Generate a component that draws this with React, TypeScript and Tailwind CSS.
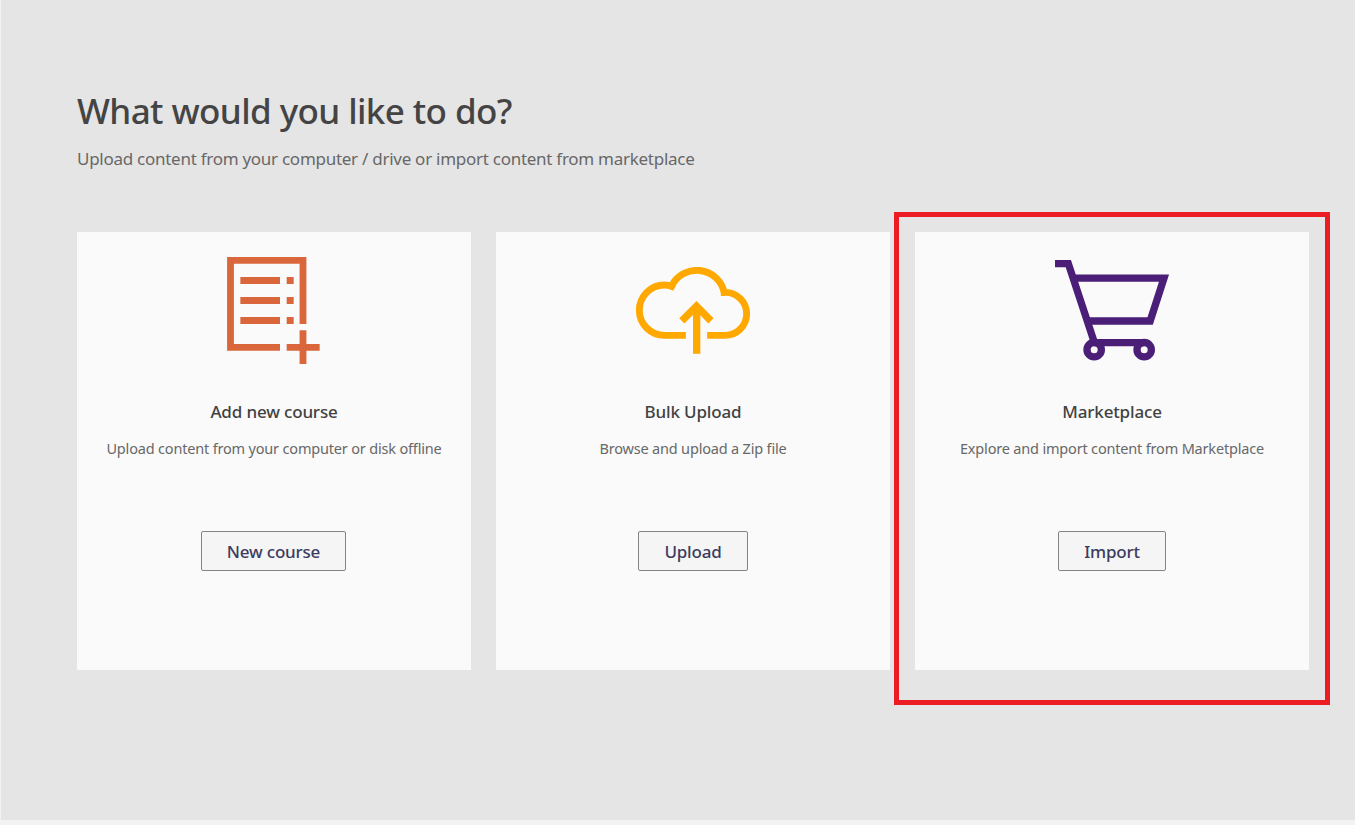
import type { ReactNode } from "react";

function CourseIcon() {
  return (
    <svg width="120" height="125" viewBox="-3 0 360 375" fill="none" stroke="#da673c" strokeWidth="20.500">
      <path d="M195 307H46.500V46H264V237" />
      <path d="M76 106.500H195M76 166.500H195M76 226.500H195M215 106.500H236M215 166.500H236M215 226.500H236" />
      <path d="M215 307H314M264 256V357" />
    </svg>
  );
}

function CloudIcon() {
  return (
    <svg width="136" height="125" viewBox="0.500 -30 408 375" fill="none" stroke="#ffa800" strokeWidth="20.500">
      <path d="M183 241H119A75.500 75.500 0 0 1 119 90Q131 90 140 94A84 84 0 0 1 298 112H301A64.500 64.500 0 0 1 301 241H247" />
      <path d="M141 94L146 105L152 93Z" fill="#ffa800" stroke="none" />
      <path d="M288 108V123H301V108Z" fill="#ffa800" stroke="none" />
      <path d="M171 197.500L215 153.500L258.500 197.500M215.500 154V296" strokeWidth="22" />
    </svg>
  );
}

function CartIcon() {
  return (
    <svg width="134" height="125" viewBox="0 -15 402 375" fill="none" stroke="#4b1f78" strokeWidth="22">
      <path d="M30 41H70L146 271" />
      <path d="M88 84.500H357L315.500 213H130" />
      <path d="M147 278H298" />
      <circle cx="147.500" cy="299" r="21.500" />
      <circle cx="297.500" cy="299" r="21.500" />
    </svg>
  );
}

type CardProps = {
  icon: ReactNode;
  title: string;
  text: string;
  action: string;
  actionClass: string;
};

function Card({ icon, title, text, action, actionClass }: CardProps) {
  return (
    <section className="flex h-[438px] w-[394px] flex-col items-center bg-[#fafafa] pt-[13px]">
      {icon}
      <h2 className="mt-[30px] text-[17px] leading-6 font-medium tracking-[-0.16px] whitespace-nowrap text-[#424242]">{title}</h2>
      <p className="mt-[14px] text-[14.500px] leading-5 tracking-[-0.18px] whitespace-nowrap text-[#686868]">{text}</p>
      <button
        className={`mt-[73px] flex h-10 items-center justify-center rounded-xs border border-[#848484] bg-[#f5f5f5] pt-0.5 text-[17px] leading-6 font-medium tracking-[-0.2px] whitespace-nowrap text-[#3d3c60] ${actionClass}`}
      >
        {action}
      </button>
    </section>
  );
}

export default function App() {
  return (
    <div className="h-[825px] w-[1355px] overflow-hidden bg-[#f3f3f3] pl-px font-['Noto_Sans',sans-serif]">
      <main className="h-[820px] bg-[#e5e5e5] pt-[87px] pl-[76px]">
        <h1 className="text-[35px] leading-[48px] font-medium tracking-[-0.6px] whitespace-nowrap text-[#444444]">
          What would you like to do?
        </h1>
        <p className="mt-3 text-[17px] leading-6 tracking-[-0.27px] whitespace-nowrap text-[#686868]">
          Upload content from your computer / drive or import content from marketplace
        </p>
        <div className="mt-[61px] flex gap-[25px]">
          <Card
            icon={<CourseIcon />}
            title="Add new course"
            text="Upload content from your computer or disk offline"
            action="New course"
            actionClass="mr-px w-[145px]"
          />
          <Card
            icon={<CloudIcon />}
            title="Bulk Upload"
            text="Browse and upload a Zip file"
            action="Upload"
            actionClass="w-[110px]"
          />
          <div className="relative">
            <Card
              icon={<CartIcon />}
              title="Marketplace"
              text="Explore and import content from Marketplace"
              action="Import"
              actionClass="w-[108px]"
            />
            <div className="pointer-events-none absolute -top-5 -left-[21px] h-[493px] w-[436px] border-5 border-[#ed1c24]" />
          </div>
        </div>
      </main>
    </div>
  );
}
